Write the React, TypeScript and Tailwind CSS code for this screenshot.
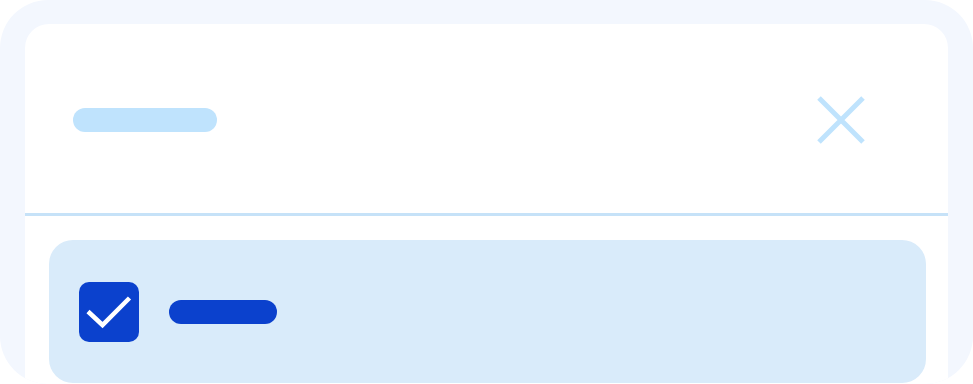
import React from "react";

const CloseIcon = () => (
  <svg width="48" height="48" viewBox="0 0 48 48" fill="none">
    <path d="M2 2L46 46M46 2L2 46" stroke="#bfe3fd" strokeWidth="5" />
  </svg>
);

const CheckItem = () => {
  return (
    <div className="flex h-[143px] items-center gap-[30px] rounded-3xl bg-[#d9ebfa] pl-[30px]">
      <div className="flex h-[60px] w-[60px] shrink-0 items-center justify-center rounded-[10px] bg-[#0b41cd]">
        <svg width="60" height="60" viewBox="0 0 60 60" fill="none">
          <path d="M9 29.5L23.5 43L50.5 16" stroke="#ffffff" strokeWidth="4.5" />
        </svg>
      </div>
      <div className="h-6 w-[108px] rounded-full bg-[#0b41cd]" />
    </div>
  );
};

export default function App() {
  return (
    <div className="h-[384px] w-[973px] overflow-hidden bg-white">
      <div className="h-[384px] w-full overflow-hidden rounded-[48px] bg-[#f3f7fe] px-[25px] pt-6">
        <div className="h-[400px] rounded-3xl bg-white">
          <div className="flex h-[189px] items-center justify-between pl-12 pr-[83px] pt-[3px]">
            <div className="h-6 w-36 rounded-full bg-[#bfe3fd]" />
            <CloseIcon />
          </div>
          <div className="h-[3px] bg-[#c6e2f8]" />
          <div className="pl-6 pr-[22px] pt-6">
            <CheckItem />
          </div>
        </div>
      </div>
    </div>
  );
}
